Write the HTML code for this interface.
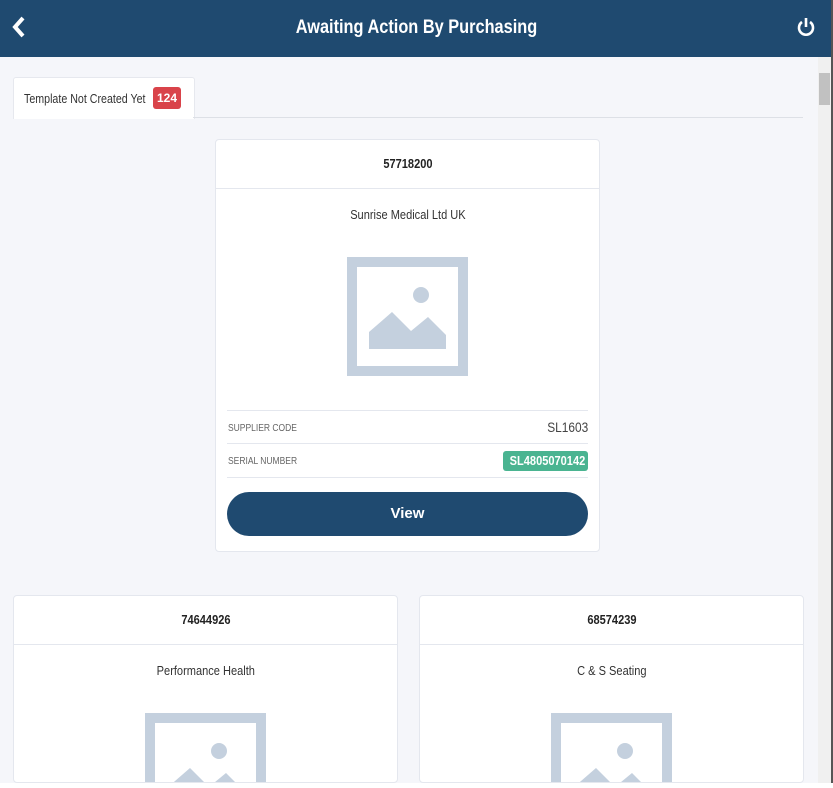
<!DOCTYPE html>
<html style="overflow:hidden;height:788px"><head><style>
body{margin:0;width:833px;height:788px;overflow:hidden;background:#f5f6fa;font-family:"Liberation Sans",sans-serif;position:relative}
.hdr{position:absolute;left:0;top:0;width:833px;height:57px;background:#1f4a70;color:#fff}
.hdr .t{position:absolute;left:0;right:0;top:17px;text-align:center;font-size:19px;font-weight:bold;transform:scaleX(.86)}
.sb{position:absolute;left:818px;top:57px;width:13px;height:726px;background:#f0f0f0}
.sb .th{position:absolute;left:1px;top:16px;width:11px;height:32px;background:#c1c1c1}
.edge{position:absolute;left:831px;top:0;width:2px;height:788px;background:#555}
.tab{position:absolute;left:13px;top:77px;width:180px;height:41px;background:#fff;border:1px solid #e6e8ee;border-bottom:none;border-radius:3px 3px 0 0;font-size:13px;color:#333}
.tab span.l{position:absolute;left:10px;top:13px;transform:scaleX(.82);transform-origin:left;white-space:nowrap}
.badge{position:absolute;left:139px;top:9px;width:28px;height:22px;background:#d9434a;color:#fff;border-radius:3px;font-size:12px;font-weight:bold;text-align:center;line-height:22px}
.tline{position:absolute;left:193px;top:117px;width:610px;height:1px;background:#dde0e6}
.card{position:absolute;background:#fff;border:1px solid #e4e7ee;border-radius:4px;overflow:hidden}
.ch{height:48px;border-bottom:1px solid #e4e7ee;text-align:center;line-height:48px;font-size:13px;font-weight:bold;color:#222}
.ch span,.nm span{display:inline-block;transform:scaleX(.85)}
.nm{text-align:center;font-size:13px;color:#333;margin-top:18px}
.ph{position:absolute;width:121px;height:119px}
.row{position:absolute;left:11px;right:11px;height:33px;border-top:1px solid #e4e7ee;font-size:10px;color:#666}
.row .k{position:absolute;left:1px;top:12px;transform:scaleX(.85);transform-origin:left;white-space:nowrap}
.row .v{position:absolute;right:0;top:8px;font-size:14px;color:#444;transform:scaleX(.85);transform-origin:right}
.ser{position:absolute;right:0;top:7px;background:#4ab491;color:#fff;font-size:13px;font-weight:bold;width:85px;height:20px;line-height:20px;text-align:center;border-radius:3px}
.ser span{display:inline-block;transform:scaleX(.85)}
.btn{position:absolute;left:11px;width:361px;height:44px;border-radius:22px;background:#1f4a70;color:#fff;text-align:center;line-height:44px;font-weight:bold;font-size:15px}
</style></head><body>
<div class="hdr">
<svg style="position:absolute;left:12px;top:16px" width="14" height="22" viewBox="0 0 14 22"><path d="M11 2 L3 11 L11 20" stroke="#fff" stroke-width="4" fill="none"/></svg>
<div class="t">Awaiting Action By Purchasing</div>
<svg style="position:absolute;left:796px;top:16px" width="20" height="22" viewBox="0 0 20 22"><path d="M6 6 A7 7 0 1 0 14 6" stroke="#fff" stroke-width="2.6" fill="none"/><path d="M10 2 V11" stroke="#fff" stroke-width="2.6"/></svg>
</div>
<div class="tab"><span class="l">Template Not Created Yet</span><div class="badge">124</div></div>
<div class="tline"></div>

<div class="card" style="left:215px;top:139px;width:383px;height:411px">
<div class="ch"><span>57718200</span></div>
<div class="nm"><span>Sunrise Medical Ltd UK</span></div>
<svg class="ph" style="left:131px;top:117px" viewBox="0 0 121 119"><rect x="5" y="5" width="111" height="109" fill="none" stroke="#c4d0de" stroke-width="10"/><path d="M22 92 L22 75 L45 55 L64 74 L81 60 L99 78 L99 92 Z" fill="#c4d0de"/><circle cx="74" cy="38" r="8" fill="#c4d0de"/></svg>
<div class="row" style="top:270px"><span class="k">SUPPLIER CODE</span><span class="v">SL1603</span></div>
<div class="row" style="top:303px"><span class="k">SERIAL NUMBER</span><span class="ser"><span>SL4805070142</span></span></div>
<div class="row" style="top:337px;height:0"></div>
<div class="btn" style="top:352px">View</div>
</div>

<div class="card" style="left:13px;top:595px;width:383px;height:186px">
<div class="ch"><span>74644926</span></div>
<div class="nm"><span>Performance Health</span></div>
<svg class="ph" style="left:131px;top:117px" viewBox="0 0 121 119"><rect x="5" y="5" width="111" height="109" fill="none" stroke="#c4d0de" stroke-width="10"/><path d="M22 92 L22 75 L45 55 L64 74 L81 60 L99 78 L99 92 Z" fill="#c4d0de"/><circle cx="74" cy="38" r="8" fill="#c4d0de"/></svg>
</div>
<div class="card" style="left:419px;top:595px;width:383px;height:186px">
<div class="ch"><span>68574239</span></div>
<div class="nm"><span>C &amp; S Seating</span></div>
<svg class="ph" style="left:131px;top:117px" viewBox="0 0 121 119"><rect x="5" y="5" width="111" height="109" fill="none" stroke="#c4d0de" stroke-width="10"/><path d="M22 92 L22 75 L45 55 L64 74 L81 60 L99 78 L99 92 Z" fill="#c4d0de"/><circle cx="74" cy="38" r="8" fill="#c4d0de"/></svg>
</div>
<div style="position:absolute;left:0;top:783px;width:833px;height:5px;background:#fff;z-index:5"></div>
<div class="sb"><div class="th"></div></div>
<div class="edge"></div>
</body></html>
